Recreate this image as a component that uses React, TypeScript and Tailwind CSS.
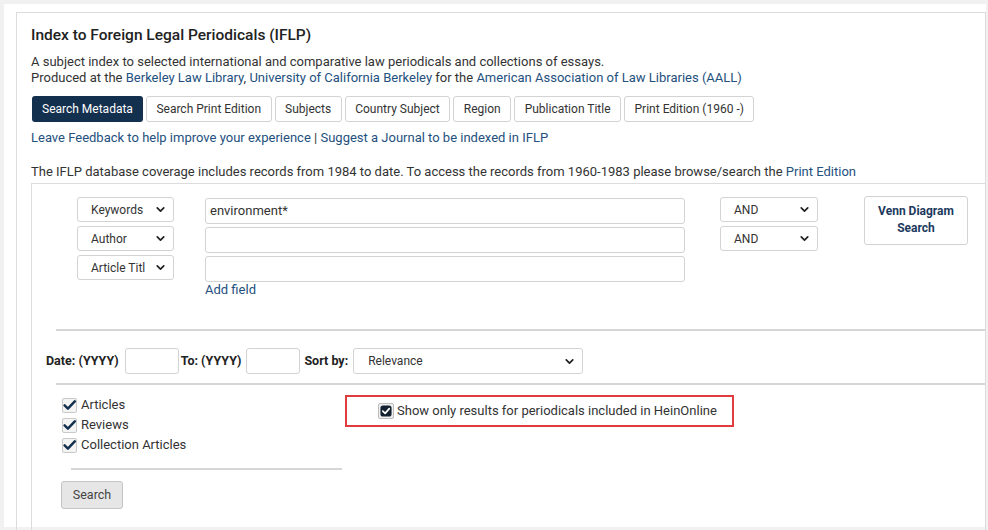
import { ChevronDown } from "lucide-react"

const link = "text-[#24507e]"

function Select({ label, className }: { label: string; className: string }) {
  return (
    <div
      className={`flex items-center justify-between rounded-[3px] border border-[#d3d3d3] bg-white pl-[13px] pr-[6px] text-[12px] text-[#333] ${className}`}
    >
      <span>{label}</span>
      <ChevronDown size={13} strokeWidth={3.2} className="text-[#222]" />
    </div>
  )
}

function Box({ className }: { className: string }) {
  return <div className={`rounded-[3px] border border-[#d3d3d3] bg-white ${className}`} />
}

function Check() {
  return (
    <span className="flex h-[15px] w-[15px] items-center justify-center rounded-[2px] border border-[#c9c9c9] bg-[#f4f4f4]">
      <svg viewBox="0 0 16 16" className="h-[14px] w-[14px]">
        <path d="M2 8.5 L6 12.5 L14.5 3.5" fill="none" stroke="#13304f" strokeWidth="3" strokeLinecap="round" strokeLinejoin="round" />
      </svg>
    </span>
  )
}

function FilledCheck() {
  return (
    <span className="flex h-[16px] w-[16px] items-center justify-center rounded-[2px] border border-[#bdbdbd] bg-[#eee]">
      <svg viewBox="0 0 14 14" className="h-[12px] w-[12px]">
        <rect x="0.5" y="0.5" width="13" height="13" rx="3" fill="#13202f" />
        <path d="M3.3 7.2 L6 9.8 L10.8 4.2" fill="none" stroke="#fff" strokeWidth="2" strokeLinecap="round" strokeLinejoin="round" />
      </svg>
    </span>
  )
}

const tabs = ["Search Print Edition", "Subjects", "Country Subject", "Region", "Publication Title", "Print Edition (1960 -)"]

export default function App() {
  return (
    <div className="h-[530px] w-[988px] overflow-hidden bg-[#f1f1f1] pl-[4px] pt-[4px] font-['Roboto',sans-serif] text-[#333]">
      <div className="h-[523px] w-[982px] bg-white pl-[12px] pt-[8px]">
        <div className="flex h-[520px] w-[970px] flex-col border-l border-r border-t border-[#dcdcdc] pl-[14px] pt-[12px]">
          <h1 className="text-[15.5px] font-medium leading-[20px] text-[#222]">Index to Foreign Legal Periodicals (IFLP)</h1>
          <p className="mt-[9px] text-[13px] leading-[16px]">
            A subject index to selected international and comparative law periodicals and collections of essays.
            <br />
            Produced at the <span className={link}>Berkeley Law Library</span>, <span className={link}>University of California Berkeley</span> for the{" "}
            <span className={link}>American Association of Law Libraries (AALL)</span>
          </p>
          <div className="ml-[1px] mt-[10px] flex gap-[3px] text-[12px]">
            <div className="flex h-[26px] items-center rounded-[3px] bg-[#13304f] px-[10px] text-white">Search Metadata</div>
            {tabs.map((t) => (
              <div key={t} className="flex h-[26px] items-center rounded-[3px] border border-[#d3d3d3] px-[9.5px] text-[#333]">
                {t}
              </div>
            ))}
          </div>
          <p className={`mt-[8px] text-[13px] leading-[16px] ${link}`}>
            Leave Feedback to help improve your experience <span className="text-[#333]">|</span> Suggest a Journal to be indexed in IFLP
          </p>
          <p className="mt-[18px] text-[13px] leading-[16px]">
            The IFLP database coverage includes records from 1984 to date. To access the records from 1960-1983 please browse/search the{" "}
            <span className={link}>Print Edition</span>
          </p>
          <div className="mt-[3px] flex-1 border-l border-t border-[#dcdcdc]">
            <div className="flex pl-[45px] pt-[13px]">
              <div className="flex flex-col gap-[4px]">
                <Select label="Keywords" className="h-[25px] w-[97px]" />
                <Select label="Author" className="h-[25px] w-[97px]" />
                <Select label="Article Titl" className="h-[25px] w-[97px]" />
              </div>
              <div className="ml-[31px] flex flex-col gap-[3px] pt-[1px]">
                <div className="flex h-[26px] w-[480px] items-center rounded-[3px] border border-[#d3d3d3] px-[4px] text-[13px]">environment*</div>
                <Box className="h-[26px] w-[480px]" />
                <Box className="h-[26px] w-[480px]" />
                <span className={`mt-[-3px] text-[13px] leading-[16px] ${link}`}>Add field</span>
              </div>
              <div className="ml-[35px] flex flex-col gap-[4px]">
                <Select label="AND" className="h-[25px] w-[98px]" />
                <Select label="AND" className="h-[25px] w-[98px]" />
              </div>
              <div className="ml-[46px] mt-[-1px] flex h-[49px] w-[104px] items-center justify-center rounded-[3px] border border-[#d3d3d3] pb-[1px] text-center text-[12px] font-bold leading-[17px] text-[#1d3a5e]">
                Venn Diagram
                <br />
                Search
              </div>
            </div>
            <div className="ml-[24px] mt-[31px] h-[2px] bg-[#d6d6d6]" />
            <div className="mt-[17px] flex items-center pl-[14px] text-[12.5px]">
              <span className="font-bold text-[#222]">Date: (YYYY)</span>
              <Box className="ml-[6px] h-[26px] w-[54px]" />
              <span className="ml-[2px] font-bold text-[#222]">To: (YYYY)</span>
              <Box className="ml-[5px] h-[26px] w-[54px]" />
              <span className="ml-[4px] font-bold text-[#222]">Sort by:</span>
              <Select label="Relevance" className="ml-[5px] h-[26px] w-[230px] pl-[14px]" />
            </div>
            <div className="ml-[24px] mt-[9px] h-[2px] bg-[#d6d6d6]" />
            <div className="flex pl-[30px] pt-[10px]">
              <div className="flex w-[283px] flex-col">
                {["Articles", "Reviews", "Collection Articles"].map((l) => (
                  <div key={l} className="flex h-[20px] items-center gap-[4px] text-[13px]">
                    <Check />
                    {l}
                  </div>
                ))}
                <div className="ml-[9px] mt-[13px] h-[2px] w-[271px] bg-[#d6d6d6]" />
                <div className="ml-[-1px] mt-[11px] flex h-[28px] w-[62px] items-center justify-center rounded-[3px] border border-[#c4c4c4] bg-[#e6e6e6] text-[12.5px] text-[#444]">
                  Search
                </div>
              </div>
              <div className="flex h-[32px] w-[389px] items-center gap-[3px] border-2 border-[#e03b3f] pl-[31px] text-[13px] text-[#333]">
                <FilledCheck />
                Show only results for periodicals included in HeinOnline
              </div>
            </div>
          </div>
        </div>
      </div>
    </div>
  )
}
